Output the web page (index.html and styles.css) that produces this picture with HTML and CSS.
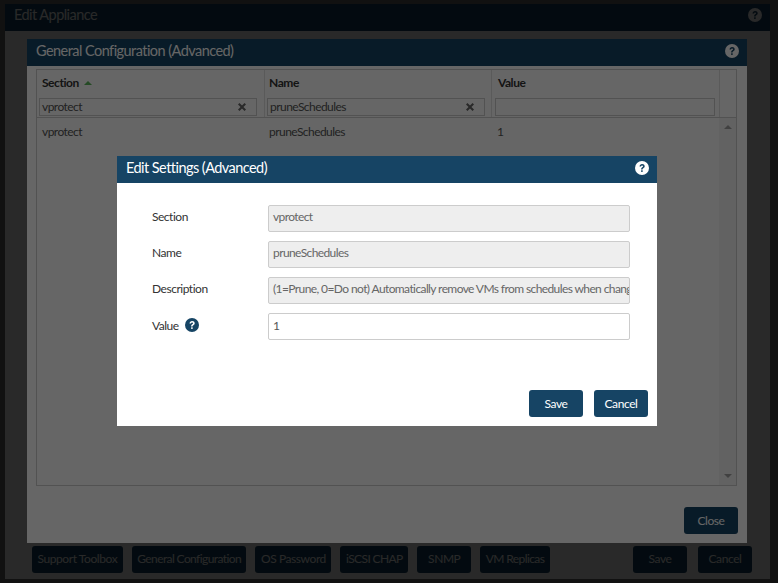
FILE: index.html
```html
<!DOCTYPE html>
<html lang="en">
<head>
<meta charset="utf-8">
<title>Edit Settings (Advanced)</title>
<link rel="stylesheet" href="styles.css">
</head>
<body>
<svg class="defs" width="0" height="0" aria-hidden="true">
  <symbol id="help" viewBox="0 0 14 14">
    <circle cx="7" cy="7" r="7" fill="currentColor"/>
    <path d="M4.5 5.4C4.6 3.9 5.7 3 7.1 3c1.5 0 2.6.9 2.6 2.2 0 1-.6 1.5-1.3 2-.6.4-.8.7-.8 1.3H6.1c0-1.1.3-1.6 1.1-2.2.6-.4.9-.7.9-1.1 0-.5-.4-.8-1-.8s-1 .4-1.1 1z" fill="var(--glyph)"/>
    <rect x="6.1" y="9.3" width="1.6" height="1.6" fill="var(--glyph)"/>
  </symbol>
  <symbol id="clear" viewBox="0 0 10 10">
    <path d="M1.8 0 5 3.2 8.2 0 10 1.8 6.8 5 10 8.2 8.2 10 5 6.8 1.8 10 0 8.2 3.2 5 0 1.8z" fill="currentColor"/>
  </symbol>
</svg>

<section class="window appliance">
  <header class="bar bar-appliance">
    <h1>Edit Appliance</h1>
    <svg class="help"><use href="#help"/></svg>
  </header>
  <div class="appliance-body"></div>
  <footer class="appliance-footer">
    <button class="btn">Support Toolbox</button>
    <button class="btn btn-tight">General Configuration</button>
    <button class="btn">OS Password</button>
    <button class="btn btn-tight">iSCSI CHAP</button>
    <button class="btn btn-fixed">SNMP</button>
    <button class="btn btn-tight">VM Replicas</button>
    <button class="btn btn-fixed push">Save</button>
    <button class="btn btn-fixed">Cancel</button>
  </footer>
</section>
<div class="backdrop"></div>

<section class="window general">
  <header class="bar">
    <h2>General Configuration (Advanced)</h2>
    <svg class="help"><use href="#help"/></svg>
  </header>
  <div class="general-body">
    <div class="grid">
      <div class="grid-head">
        <div class="col col-section">
          <div class="col-title">Section <span class="sort"></span></div>
          <div class="filter"><span>vprotect</span><svg class="clear"><use href="#clear"/></svg></div>
        </div>
        <div class="col col-name">
          <div class="col-title">Name</div>
          <div class="filter"><span>pruneSchedules</span><svg class="clear"><use href="#clear"/></svg></div>
        </div>
        <div class="col col-value">
          <div class="col-title">Value</div>
          <div class="filter"></div>
        </div>
        <div class="head-gutter"></div>
      </div>
      <div class="grid-body">
        <div class="rows">
          <div class="row"><span>vprotect</span><span>pruneSchedules</span><span>1</span></div>
        </div>
        <div class="scrollbar"><span class="arrow up"></span><span class="arrow down"></span></div>
      </div>
    </div>
    <div class="general-actions"><button class="btn btn-fixed">Close</button></div>
  </div>
</section>
<div class="backdrop"></div>

<section class="window settings">
  <header class="bar">
    <h2>Edit Settings (Advanced)</h2>
    <svg class="help"><use href="#help"/></svg>
  </header>
  <div class="settings-body">
    <form class="form">
      <label>Section</label>
      <div class="field disabled">vprotect</div>
      <label>Name</label>
      <div class="field disabled">pruneSchedules</div>
      <label>Description</label>
      <div class="field disabled">(1=Prune, 0=Do not) Automatically remove VMs from schedules when chang</div>
      <label class="label-value">Value <svg class="help help-dark"><use href="#help"/></svg></label>
      <div class="field field-value">1</div>
    </form>
    <div class="settings-actions">
      <button class="btn btn-fixed">Save</button>
      <button class="btn btn-fixed">Cancel</button>
    </div>
  </div>
</section>
</body>
</html>
```
FILE: styles.css
```css
* { box-sizing: border-box; }
html, body { margin: 0; height: 100%; }
body {
  width: 778px;
  height: 583px;
  overflow: hidden;
  position: relative;
  background: #6c6c6c;
  font-family: "Lato", "Open Sans", sans-serif;
  font-size: 12px;
  letter-spacing: -.42px;
  color: #333;
}
.defs { position: absolute; }
.backdrop { position: absolute; inset: 0; background: rgba(0, 0, 0, .6); }
.window { position: absolute; display: flex; flex-direction: column; background: #fff; }
.appliance { left: 5px; top: 4px; width: 765px; height: 575px; }
.general { left: 27px; top: 39px; width: 720px; height: 504px; }
.settings { left: 117px; top: 156px; width: 540px; height: 270px; }

.bar {
  flex: none;
  display: flex;
  align-items: center;
  justify-content: space-between;
  height: 27px;
  padding: 0 8px 0 9px;
  background: #164464;
  color: #fff;
}
.bar h1, .bar h2 {
  margin: 0 0 5px;
  font-size: 14.5px;
  font-weight: 400;
  letter-spacing: -.55px;
}
.bar-appliance h1 { margin-bottom: 6px; }
.help { flex: none; width: 14px; height: 14px; margin-bottom: 4px; color: #fff; --glyph: #164464; }
.bar-appliance .help { margin-bottom: 5px; }
.help-dark { margin: 0 0 0 3px; color: #164464; --glyph: #fff; vertical-align: -2px; }

.appliance-body { flex: 1; }
.appliance-footer { flex: none; display: flex; gap: 9px; padding: 0 18px 6px 27px; }
.appliance-footer .btn { padding: 0 5.5px 2px; }
.appliance-footer .btn-fixed { padding: 0 0 2px; }
.push { margin-left: auto; margin-right: 2px; }

.btn {
  height: 27px;
  padding: 0 6px;
  border: 0;
  border-radius: 3px;
  background: #164464;
  color: #fff;
  font: inherit;
  letter-spacing: inherit;
}
.btn-tight { letter-spacing: -.6px; }
.btn-fixed { width: 54px; padding: 0; }

.general-body { flex: 1; display: flex; flex-direction: column; padding: 3px 10px 9px 9px; }
.grid { flex: 1; display: flex; flex-direction: column; border: 1px solid #ccc; }
.grid-head { flex: none; display: flex; height: 48px; border-bottom: 1px solid #ccc; }
.col { padding: 0 7px 0 2px; border-right: 1px solid #e2e2e2; }
.col-section { width: 228px; }
.col-name { width: 227px; padding-right: 6px; }
.col-value { width: 228px; padding: 0 4px 0 3px; }
.col-name .col-title { padding-left: 2px; }
.col-title { height: 28px; padding: 5px 0 0 3px; color: #333; font-weight: 700; letter-spacing: -.45px; }
.sort {
  display: inline-block;
  margin: 0 0 2px 3px;
  border: 4px solid transparent;
  border-top: 0;
  border-bottom: 4px solid #5cb85c;
}
.filter {
  display: flex;
  align-items: center;
  justify-content: space-between;
  height: 18px;
  padding: 0 10px 1px 2px;
  border: 1px solid #ccc;
  color: #555;
  letter-spacing: -.55px;
}
.clear { width: 8px; height: 8px; color: #666; }
.head-gutter { flex: 1; }
.grid-body { flex: 1; display: flex; }
.rows { flex: 1; }
.row { display: grid; grid-template-columns: 227px 228px 1fr; padding: 6px 0 0 5px; color: #555; letter-spacing: -.55px; }
.scrollbar {
  flex: none;
  width: 17px;
  display: flex;
  flex-direction: column;
  justify-content: space-between;
  align-items: center;
  padding: 7px 0;
  background: #f4f4f4;
}
.arrow { border: 4px solid transparent; }
.arrow.up { border-top: 0; border-bottom: 4px solid #a3a3a3; }
.arrow.down { border-bottom: 0; border-top: 4px solid #a3a3a3; }
.general-actions { flex: none; display: flex; justify-content: flex-end; padding: 21px 0 0; margin-right: -1px; }

.settings-body { flex: 1; display: flex; flex-direction: column; }
.form {
  display: grid;
  grid-template-columns: 116px 362px;
  grid-auto-rows: 27px;
  row-gap: 9px;
  align-items: center;
  padding: 22px 0 0 35px;
}
.form label { color: #333; padding-bottom: 4px; letter-spacing: -.48px; }
.form .label-value { padding-bottom: 2px; word-spacing: 1px; }
.field {
  height: 27px;
  line-height: 22px;
  padding: 0 4px;
  border: 1px solid #ccc;
  border-radius: 2px;
  white-space: nowrap;
  overflow: hidden;
  color: #666;
  letter-spacing: -.6px;
}
.field.disabled { background: #eee; }
.field.field-value { line-height: 24px; color: #555; }
.settings-actions { margin-top: auto; display: flex; justify-content: flex-end; gap: 11px; padding: 0 9px 9px 0; }
```
